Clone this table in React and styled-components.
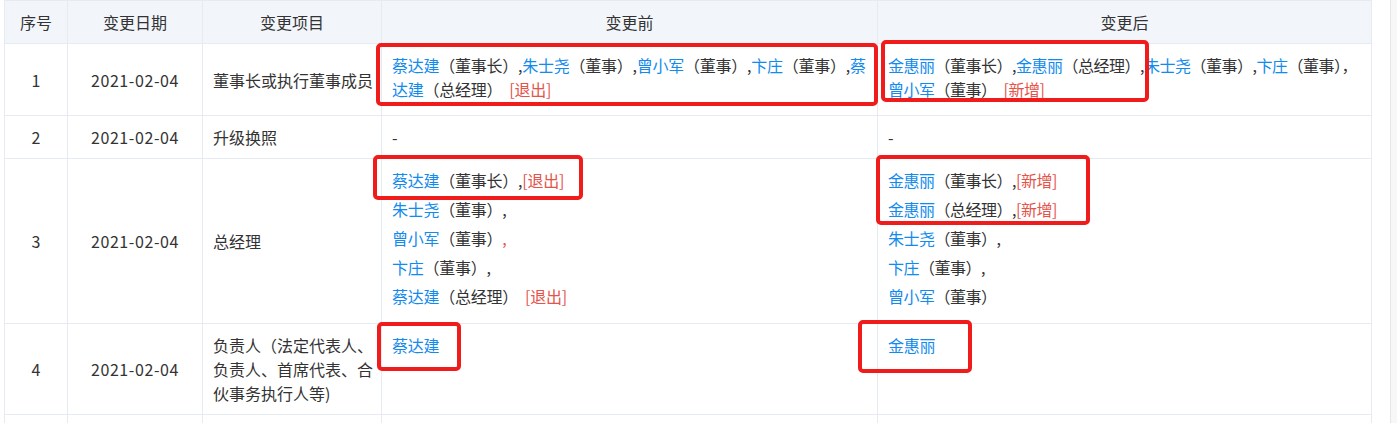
import React from 'react';
import styled, { createGlobalStyle } from 'styled-components';

const Global = createGlobalStyle`
  html, body { margin: 0; padding: 0; background: #fff; }
  body {
    font-family: "Noto Sans CJK SC", "Noto Sans", sans-serif;
    font-size: 16px;
    color: #333;
  }
`;

const Page = styled.div`
  display: flex;
  width: 1397px;
  height: 423px;
  overflow: hidden;
`;

const Content = styled.div`
  position: relative;
  padding-left: 4px;
  width: 1367px;
  flex: none;
`;

const Gutter = styled.div`
  flex: none;
  margin-left: 19px;
  width: 6px;
  border-left: 1px solid #e6e6e6;
  background: #f7f7f7;
`;

const Table = styled.table`
  width: 1367px;
  border-collapse: collapse;
  table-layout: fixed;
`;

const Col = styled.col`
  width: ${(p) => p.$w}px;
`;

const Th = styled.th`
  background: #f2f6fb;
  border: 1px solid #e6ebf1;
  padding: 9px 8px;
  line-height: 24px;
  font-weight: 400;
  text-align: center;
  color: #333;
`;

const Tr = styled.tr`
  height: ${(p) => (p.$h ? `${p.$h}px` : 'auto')};
`;

const Td = styled.td`
  border: 1px solid #e6ebf1;
  line-height: 24px;
  padding: ${(p) => (p.$center ? '9px 8px' : p.$top ? '9px 2px 9px 10px' : '9px 4px 9px 10px')};
  text-align: ${(p) => (p.$center ? 'center' : 'left')};
  vertical-align: ${(p) => (p.$top ? 'top' : 'middle')};
  letter-spacing: ${(p) => (p.$tight ? '-0.5px' : p.$top ? '-0.25px' : 'normal')};
  color: #333;
`;

const DateText = styled.span`
  letter-spacing: 0.6px;
`;

const Line = styled.div`
  margin-bottom: 5px;
`;

const Name = styled.span`
  color: #128bed;
`;

const Tag = styled.span`
  color: #e4544a;
  margin-left: ${(p) => (p.$gap ? '7px' : '0')};
`;

const Mark = styled.div`
  position: absolute;
  left: ${(p) => p.$x}px;
  top: ${(p) => p.$y}px;
  width: ${(p) => p.$w}px;
  height: ${(p) => p.$h}px;
  box-sizing: border-box;
  border: 4px solid #f01c1c;
  border-radius: 5px;
  pointer-events: none;
`;

const marks = [
  { x: 376, y: 43, w: 502, h: 63 },
  { x: 881, y: 40, w: 268, h: 62 },
  { x: 373, y: 155, w: 210, h: 45 },
  { x: 876, y: 155, w: 214, h: 70 },
  { x: 377, y: 322, w: 84, h: 49 },
  { x: 858, y: 320, w: 114, h: 53 },
];

const DATE = '2021-02-04';

export default function App() {
  return (
    <>
      <Global />
      <Page>
        <Content>
          <Table>
            <colgroup>
              <Col $w={63} />
              <Col $w={135} />
              <Col $w={179} />
              <Col $w={496} />
              <Col $w={494} />
            </colgroup>
            <thead>
              <tr>
                <Th>序号</Th>
                <Th>变更日期</Th>
                <Th>变更项目</Th>
                <Th>变更前</Th>
                <Th>变更后</Th>
              </tr>
            </thead>
            <tbody>
              <Tr $h={72}>
                <Td $center>1</Td>
                <Td $center><DateText>{DATE}</DateText></Td>
                <Td>董事长或执行董事成员</Td>
                <Td $top>
                  <Line>
                    <Name>蔡达建</Name>（董事长）,<Name>朱士尧</Name>（董事）,
                    <Name>曾小军</Name>（董事）,<Name>卞庄</Name>（董事）,
                    <Name>蔡达建</Name>（总经理）<Tag $gap>[退出]</Tag>
                  </Line>
                </Td>
                <Td $top $tight>
                  <Line>
                    <Name>金惠丽</Name>（董事长）,<Name>金惠丽</Name>（总经理）,
                    <Name>朱士尧</Name>（董事）,<Name>卞庄</Name>（董事），
                    <Name>曾小军</Name>（董事）<Tag $gap>[新增]</Tag>
                  </Line>
                </Td>
              </Tr>
              <Tr>
                <Td $center>2</Td>
                <Td $center><DateText>{DATE}</DateText></Td>
                <Td>升级换照</Td>
                <Td $top>-</Td>
                <Td $top>-</Td>
              </Tr>
              <Tr $h={165}>
                <Td $center>3</Td>
                <Td $center><DateText>{DATE}</DateText></Td>
                <Td>总经理</Td>
                <Td $top>
                  <Line>
                    <Name>蔡达建</Name>（董事长）,<Tag>[退出]</Tag>
                  </Line>
                  <Line>
                    <Name>朱士尧</Name>（董事）,
                  </Line>
                  <Line>
                    <Name>曾小军</Name>（董事）<Tag>,</Tag>
                  </Line>
                  <Line>
                    <Name>卞庄</Name>（董事）,
                  </Line>
                  <Line>
                    <Name>蔡达建</Name>（总经理）<Tag $gap>[退出]</Tag>
                  </Line>
                </Td>
                <Td $top $tight>
                  <Line>
                    <Name>金惠丽</Name>（董事长）,<Tag>[新增]</Tag>
                  </Line>
                  <Line>
                    <Name>金惠丽</Name>（总经理）,<Tag>[新增]</Tag>
                  </Line>
                  <Line>
                    <Name>朱士尧</Name>（董事）,
                  </Line>
                  <Line>
                    <Name>卞庄</Name>（董事）,
                  </Line>
                  <Line>
                    <Name>曾小军</Name>（董事）
                  </Line>
                </Td>
              </Tr>
              <Tr>
                <Td $center>4</Td>
                <Td $center><DateText>{DATE}</DateText></Td>
                <Td>负责人（法定代表人、负责人、首席代表、合伙事务执行人等)</Td>
                <Td $top>
                  <Name>蔡达建</Name>
                </Td>
                <Td $top>
                  <Name>金惠丽</Name>
                </Td>
              </Tr>
              <Tr $h={44}>
                <Td $center />
                <Td $center />
                <Td />
                <Td $top />
                <Td $top />
              </Tr>
            </tbody>
          </Table>
          {marks.map((m, i) => (
            <Mark key={i} $x={m.x} $y={m.y} $w={m.w} $h={m.h} />
          ))}
        </Content>
        <Gutter />
      </Page>
    </>
  );
}
